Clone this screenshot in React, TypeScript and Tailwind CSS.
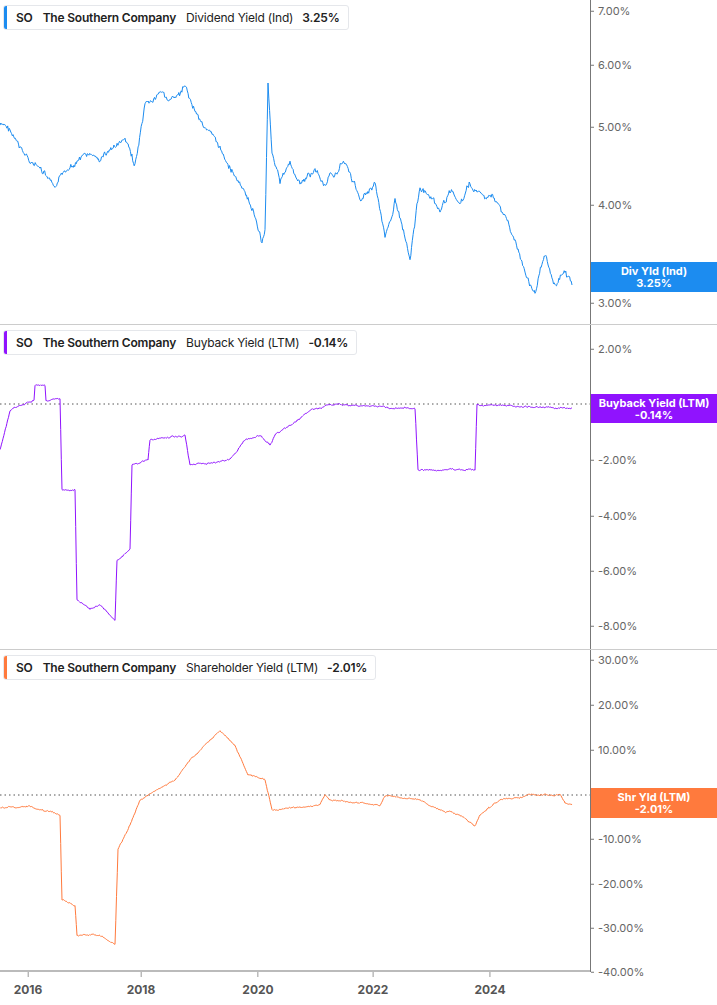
import React from 'react';

type Pt = [number, number];

// deterministic jitter so the lines look like market data
function rand(seed: number) {
  let s = seed;
  return () => {
    s = (s * 9301 + 49297) % 233280;
    return s / 233280;
  };
}

function buildPath(points: Pt[], amp: number, seed: number, stepPx = 0.8) {
  const r = rand(seed);
  const out: string[] = [];
  let drift = 0;
  for (let i = 0; i < points.length - 1; i++) {
    const [x0, y0] = points[i];
    const [x1, y1] = points[i + 1];
    const n = Math.max(1, Math.round(Math.abs(x1 - x0) / stepPx));
    for (let k = 0; k < n; k++) {
      const t = k / n;
      drift = drift * 0.85 + (r() - 0.5) * amp;
      const x = x0 + (x1 - x0) * t;
      const y = y0 + (y1 - y0) * t + drift + (r() - 0.5) * amp * 0.8;
      out.push(`${out.length ? 'L' : 'M'}${x.toFixed(1)} ${y.toFixed(1)}`);
    }
  }
  const last = points[points.length - 1];
  out.push(`L${last[0]} ${last[1]}`);
  return out.join(' ');
}

const divPts: Pt[] = [
  [0, 125], [10, 130], [20, 150], [40, 170], [55, 190], [70, 165], [85, 155], [100, 160], [110, 150],
  [125, 140], [135, 165], [145, 110], [160, 95], [175, 100], [185, 90], [195, 110], [205, 125], [220, 150],
  [235, 175], [245, 195], [255, 215], [262, 245], [265, 230], [268, 80], [272, 150], [280, 180], [290, 165],
  [300, 185], [315, 170], [325, 185], [345, 160], [360, 200], [375, 180], [385, 240], [395, 200], [405, 235],
  [410, 255], [420, 185], [430, 200], [440, 215], [450, 190], [460, 205], [470, 185], [480, 195], [495, 200],
  [505, 215], [515, 240], [525, 275], [535, 295], [545, 250], [555, 285], [565, 270], [572, 285],
];

const buyPts: Pt[] = [
  [0, 450], [10, 410], [34, 400], [35, 385], [45, 385], [46, 400], [60, 400], [62, 490], [75, 490], [77, 600],
  [90, 610], [100, 605], [115, 620], [117, 560], [130, 550], [132, 465], [148, 460], [150, 440], [185, 435],
  [190, 465], [230, 460], [245, 440], [260, 435], [270, 445], [275, 435], [290, 425], [310, 410], [330, 405],
  [415, 408], [418, 470], [475, 470], [477, 405], [572, 408],
].map(([x, y]) => [x, y - 325] as Pt);

const shrPts: Pt[] = [
  [0, 808], [30, 806], [60, 815], [62, 900], [75, 905], [77, 935], [100, 935], [115, 945], [118, 850],
  [130, 825], [140, 800], [155, 790], [175, 780], [190, 760], [205, 745], [220, 730], [235, 745], [248, 775],
  [265, 780], [272, 810], [320, 805], [325, 795], [330, 800], [380, 805], [385, 795], [420, 800], [440, 810],
  [460, 815], [475, 825], [480, 815], [500, 800], [530, 795], [560, 795], [565, 803], [572, 805],
].map(([x, y]) => [x, y - 650] as Pt);

type Tick = { y: number; label: string };

function Legend({ color, metric, value }: { color: string; metric: string; value: string }) {
  return (
    <div className="absolute left-[3px] top-[5px] flex items-center h-[25px] bg-white border border-gray-200 rounded-[3px] overflow-hidden">
      <div className="w-[3px] h-full" style={{ background: color }} />
      <div className="flex items-center gap-[10px] pl-[9px] pr-[8px] text-[12px] tracking-[-0.2px] text-[#222]">
        <span className="font-semibold">SO</span>
        <span className="font-semibold">The Southern Company</span>
        <span className="flex gap-[9px]">
          <span>{metric}</span>
          <span className="font-semibold">{value}</span>
        </span>
      </div>
    </div>
  );
}

function Panel({
  h, color, path, ticks, legend, value, tag, tagTop, tagH, zeroY,
}: {
  h: number; color: string; path: string; ticks: Tick[]; legend: string; value: string;
  tag: string; tagTop: number; tagH: number; zeroY?: number;
}) {
  return (
    <div className="flex border-b border-[#ccc]" style={{ height: h }}>
      <div className="relative w-[590px]">
        <svg width="590" height={h} className="absolute inset-0">
          {zeroY !== undefined && (
            <line x1="0" x2="590" y1={zeroY} y2={zeroY} stroke="#555" strokeDasharray="1.5 3" strokeWidth="1" />
          )}
          <path d={path} fill="none" stroke={color} strokeWidth="1" strokeLinejoin="round" />
        </svg>
        <Legend color={color} metric={legend} value={value} />
      </div>
      <div className="relative flex-1 border-l border-[#777] bg-white">
        {ticks.map((t) => (
          <div key={t.label} className="absolute left-0 flex items-center -translate-y-1/2" style={{ top: t.y }}>
            <div className="w-[3px] h-[1px] bg-[#777]" />
            <span className="ml-[4px] text-[11px] text-[#666]">{t.label}</span>
          </div>
        ))}
        <div
          className="absolute left-0 right-0 flex flex-col items-center justify-center text-white text-[11px] font-bold leading-[12px]"
          style={{ top: tagTop, height: tagH, background: color }}
        >
          <span>{tag}</span>
          <span>{value}</span>
        </div>
      </div>
    </div>
  );
}

export default function App() {
  return (
    <div className="w-[717px] h-[1005px] bg-white overflow-hidden" style={{ fontFamily: 'Inter, "Liberation Sans", sans-serif' }}>
      <Panel
        h={325} color="#1c8cf0" path={buildPath(divPts, 4, 7)} legend="Dividend Yield (Ind)" value="3.25%"
        tag="Div Yld (Ind)" tagTop={262} tagH={30}
        ticks={[{ y: 11, label: '7.00%' }, { y: 65, label: '6.00%' }, { y: 127, label: '5.00%' }, { y: 205, label: '4.00%' }, { y: 303, label: '3.00%' }]}
      />
      <Panel
        h={325} color="#9013fe" path={buildPath(buyPts, 1, 3)} legend="Buyback Yield (LTM)" value="-0.14%"
        tag="Buyback Yield (LTM)" tagTop={69} tagH={29} zeroY={79}
        ticks={[{ y: 24, label: '2.00%' }, { y: 135, label: '-2.00%' }, { y: 191, label: '-4.00%' }, { y: 246, label: '-6.00%' }, { y: 301, label: '-8.00%' }]}
      />
      <div className="flex h-[322px]">
        <div className="relative w-[590px] border-b-2 border-[#bbb]">
          <svg width="590" height="322" className="absolute inset-0">
            <line x1="0" x2="590" y1="145" y2="145" stroke="#555" strokeDasharray="1.5 3" strokeWidth="1" />
            <path d={buildPath(shrPts, 1, 11)} fill="none" stroke="#ff7a3d" strokeWidth="1" strokeLinejoin="round" />
          </svg>
          <Legend color="#ff7a3d" metric="Shareholder Yield (LTM)" value="-2.01%" />
        </div>
        <div className="relative flex-1 border-l border-[#777]">
          {[['30.00%', 10], ['20.00%', 55], ['10.00%', 100], ['-10.00%', 189], ['-20.00%', 234], ['-30.00%', 278], ['-40.00%', 322]].map(([l, y]) => (
            <div key={l} className="absolute left-0 flex items-center -translate-y-1/2" style={{ top: y as number }}>
              <div className="w-[3px] h-[1px] bg-[#777]" />
              <span className="ml-[4px] text-[11px] text-[#666]">{l}</span>
            </div>
          ))}
          <div className="absolute left-0 right-0 top-[138px] h-[30px] flex flex-col items-center justify-center text-white text-[11px] font-bold leading-[12px] bg-[#ff7a3d]">
            <span>Shr Yld (LTM)</span>
            <span>-2.01%</span>
          </div>
        </div>
      </div>
      <div className="relative w-[590px] h-[33px] text-[12px] font-bold text-[#555]">
        {[['2016', 28], ['2018', 141], ['2020', 258], ['2022', 373], ['2024', 490]].map(([l, x]) => (
          <div key={l} className="absolute top-0 flex flex-col items-center -translate-x-1/2" style={{ left: x as number }}>
            <div className="w-[1px] h-[5px] bg-[#999]" />
            <span className="mt-[4px]">{l}</span>
          </div>
        ))}
      </div>
    </div>
  );
}
